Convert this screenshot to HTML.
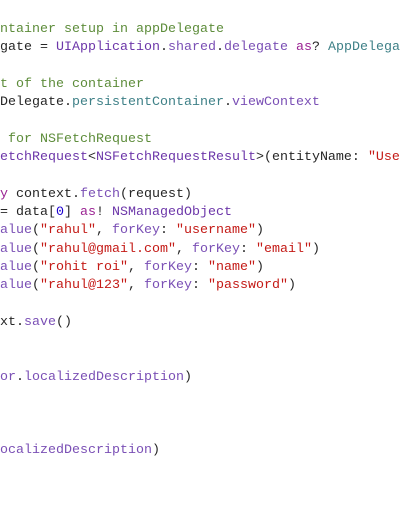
<!DOCTYPE html>
<html><head><meta charset="utf-8"><style>
html,body{margin:0;padding:0;background:#fff;width:400px;height:516px;overflow:hidden}
pre{position:absolute;left:0;top:21px;margin:0;font-family:"Liberation Mono",monospace;font-size:13.33px;line-height:18.3px;color:#262626;white-space:pre}
.c{color:#5d8c3a}.t{color:#6c36a9}.m{color:#7a4fb5}.k{color:#9b2393}.s{color:#c41a16}.n{color:#1c00cf}.v{color:#3e8087}
</style></head><body>
<pre><span class="c">ntainer setup in appDelegate</span>
gate = <span class="t">UIApplication</span>.<span class="m">shared</span>.<span class="m">delegate</span> <span class="k">as</span>? <span class="v">AppDelegate</span>

<span class="c">t of the container</span>
Delegate.<span class="v">persistentContainer</span>.<span class="m">viewContext</span>

<span class="c"> for NSFetchRequest</span>
<span class="t">etchRequest</span>&lt;<span class="t">NSFetchRequestResult</span>&gt;(entityName: <span class="s">"User"</span>

<span class="k">y</span> context.<span class="m">fetch</span>(request)
= data[<span class="n">0</span>] <span class="k">as</span>! <span class="t">NSManagedObject</span>
<span class="m">alue</span>(<span class="s">"rahul"</span>, <span class="m">forKey</span>: <span class="s">"username"</span>)
<span class="m">alue</span>(<span class="s">"rahul@gmail.com"</span>, <span class="m">forKey</span>: <span class="s">"email"</span>)
<span class="m">alue</span>(<span class="s">"rohit roi"</span>, <span class="m">forKey</span>: <span class="s">"name"</span>)
<span class="m">alue</span>(<span class="s">"rahul@123"</span>, <span class="m">forKey</span>: <span class="s">"password"</span>)

xt.<span class="m">save</span>()


<span class="m">or</span>.<span class="m">localizedDescription</span>)



<span class="m">ocalizedDescription</span>)
</pre>
</body></html>
